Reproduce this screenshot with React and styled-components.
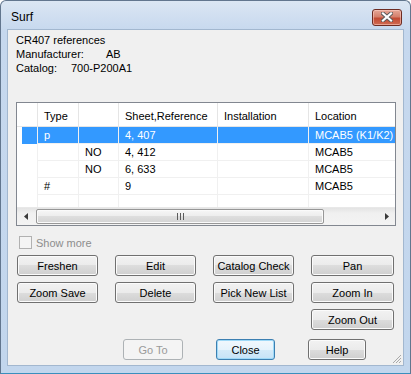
import React from "react";
import styled, { createGlobalStyle, css } from "styled-components";

const GlobalStyle = createGlobalStyle`
  body {
    margin: 0;
    font-family: "Liberation Sans", Arial, sans-serif;
    font-size: 11px;
    color: #000;
    background: #fff;
  }
`;

const Window = styled.div`
  width: 411px;
  height: 374px;
  box-sizing: border-box;
  border: 1px solid #62768e;
  border-bottom-color: #3a8fbd;
  border-radius: 6px 6px 0 0;
  background: linear-gradient(#dbe6f3, #c6d8ee 30px, #c2d6ed);
  padding: 0 6px 7px 6px;
  display: flex;
  flex-direction: column;
`;

const TitleBar = styled.div`
  height: 28px;
  box-sizing: border-box;
  padding: 4px 2px 0 4px;
  display: flex;
  align-items: center;
  justify-content: space-between;
`;

const Title = styled.span`
  font-size: 12px;
  color: #000;
`;

const CloseX = styled.div`
  width: 30px;
  height: 17px;
  box-sizing: border-box;
  border: 1px solid #6d2c22;
  border-radius: 3px;
  background: linear-gradient(#e6a797, #d5806c 45%, #c24a33 55%, #cf6b52);
  box-shadow: inset 0 0 0 1px rgba(255, 210, 200, 0.55);
  display: flex;
  align-items: center;
  justify-content: center;
`;

const Client = styled.div`
  flex: 1;
  position: relative;
  background: #f0f0f0;
  border: 1px solid #a2b7cf;
  padding: 3px 8px 0 8px;
  display: flex;
  flex-direction: column;
`;

const Info = styled.div`
  line-height: 14px;
`;

const Field = styled.div`
  display: flex;
`;

const Label = styled.span`
  width: ${(p) => p.$w}px;
`;

const ListView = styled.div`
  margin-top: 27px;
  width: 380px;
  height: 124px;
  box-sizing: border-box;
  border: 1px solid #828790;
  background: #fff;
  display: flex;
  flex-direction: column;
  overflow: hidden;
`;

const cols = "21px 41px 40px 99px 91px 1fr";

const HeaderRow = styled.div`
  display: grid;
  grid-template-columns: ${cols};
  height: 24px;
  box-sizing: border-box;
  border-bottom: 1px solid #e5e5e5;
  flex-shrink: 0;
`;

const HeaderCell = styled.div`
  border-right: 1px solid #e5e5e5;
  padding: 3px 0 0 6px;
  display: flex;
  align-items: center;
  white-space: nowrap;
  &:last-child {
    border-right: none;
  }
`;

const Body = styled.div`
  flex: 1;
  overflow: hidden;
`;

const Row = styled.div`
  display: grid;
  grid-template-columns: ${cols};
  height: 17px;
`;

const Cell = styled.div`
  border-right: 1px solid #f0f0f0;
  border-bottom: 1px solid #f0f0f0;
  padding-left: 6px;
  display: flex;
  align-items: center;
  white-space: nowrap;
  overflow: hidden;
  ${(p) =>
    p.$selected &&
    css`
      background: #3399ff;
      color: #fff;
    `}
  &:first-child {
    border-bottom: none;
    padding: 0;
    ${(p) =>
      p.$selected &&
      css`
        background: linear-gradient(to right, #fff 5px, #3399ff 5px);
      `}
  }
  &:last-child {
    border-right: none;
  }
`;

const ScrollBar = styled.div`
  height: 17px;
  flex-shrink: 0;
  display: flex;
  align-items: stretch;
  background: linear-gradient(#e3e3e3, #f0f0f0 30%, #f3f3f3);
  border-top: 1px solid #e8e8e8;
`;

const ArrowBtn = styled.div`
  width: 17px;
  display: flex;
  align-items: center;
  justify-content: center;
`;

const Track = styled.div`
  flex: 1;
  padding: 1px 2px;
  display: flex;
`;

const Thumb = styled.div`
  width: 288px;
  box-sizing: border-box;
  border: 1px solid #979797;
  border-radius: 2px;
  background: linear-gradient(#f7f7f7, #ececec 50%, #dedede 50%, #d3d3d3);
  box-shadow: inset 0 0 0 1px #fafafa;
  display: flex;
  align-items: center;
  justify-content: center;
`;

const CheckRow = styled.label`
  margin: 10px 0 0 3px;
  display: flex;
  align-items: center;
  gap: 4px;
  color: #8d8d8d;
  height: 13px;
`;

const Box = styled.span`
  width: 13px;
  height: 13px;
  box-sizing: border-box;
  border: 1px solid #b1b1b1;
  background: #f4f4f4;
`;

const ButtonGrid = styled.div`
  margin: 6px 0 0 1px;
  display: grid;
  grid-template-columns: 81px 81px 81px 83px;
  grid-auto-rows: 21px;
  column-gap: 17px;
  row-gap: 6px;
`;

const Button = styled.div`
  box-sizing: border-box;
  height: 21px;
  width: ${(p) => (p.$w ? `${p.$w}px` : "auto")};
  border: 1px solid #707070;
  border-radius: 3px;
  background: linear-gradient(#f2f2f2, #ebebeb 50%, #dddddd 50%, #cfcfcf);
  box-shadow: inset 0 0 0 1px #fbfbfb;
  display: flex;
  align-items: center;
  justify-content: center;
  white-space: nowrap;
  grid-column: ${(p) => p.$col || "auto"};
  ${(p) =>
    p.$default &&
    css`
      border-color: #3c7fb1;
      background: linear-gradient(#f1f8fd, #e6f3fc 50%, #d5ebf9 50%, #c6e3f7);
      box-shadow: inset 0 0 0 1px #9fd9f7;
    `}
  ${(p) =>
    p.$disabled &&
    css`
      border-color: #adb2b5;
      background: #f4f4f4;
      box-shadow: none;
      color: #9a9a9a;
    `}
`;

const BottomRow = styled.div`
  margin: 9px 0 0 107px;
  display: flex;
  gap: 33px;
`;

const Grip = styled.svg`
  position: absolute;
  right: 1px;
  bottom: 1px;
`;

const rows = [
  ["", "p", "", "4, 407", "", "MCAB5 (K1/K2)"],
  ["", "", "NO", "4, 412", "", "MCAB5"],
  ["", "", "NO", "6, 633", "", "MCAB5"],
  ["", "#", "", "9", "", "MCAB5"],
  ["", "", "", "", "", ""],
];

const headers = ["", "Type", "", "Sheet,Reference", "Installation", "Location"];

export default function App() {
  return (
    <>
      <GlobalStyle />
      <Window>
        <TitleBar>
          <Title>Surf</Title>
          <CloseX>
            <svg width="12" height="10" viewBox="0 0 12 10">
              <path d="M2 1.5 L10 8.5 M10 1.5 L2 8.5" stroke="#5a5a5a" strokeWidth="4" strokeLinecap="square" />
              <path d="M2 1.5 L10 8.5 M10 1.5 L2 8.5" stroke="#fff" strokeWidth="2.2" strokeLinecap="square" />
            </svg>
          </CloseX>
        </TitleBar>
        <Client>
          <Info>
            <div>CR407 references</div>
            <Field>
              <Label $w={90}>Manufacturer:</Label>
              <span>AB</span>
            </Field>
            <Field>
              <Label $w={55}>Catalog:</Label>
              <span>700-P200A1</span>
            </Field>
          </Info>

          <ListView>
            <HeaderRow>
              {headers.map((h, i) => (
                <HeaderCell key={i}>{h}</HeaderCell>
              ))}
            </HeaderRow>
            <Body>
              {rows.map((r, i) => (
                <Row key={i}>
                  {r.map((c, j) => (
                    <Cell key={j} $selected={i === 0}>
                      {c}
                    </Cell>
                  ))}
                </Row>
              ))}
            </Body>
            <ScrollBar>
              <ArrowBtn>
                <svg width="4" height="7" viewBox="0 0 4 7">
                  <path d="M4 0 L0 3.5 L4 7 Z" fill="#3a3a3a" />
                </svg>
              </ArrowBtn>
              <Track>
                <Thumb>
                  <svg width="7" height="7" viewBox="0 0 7 7">
                    <path d="M0.5 0 V7 M3.5 0 V7 M6.5 0 V7" stroke="#5c5c5c" strokeWidth="1" />
                  </svg>
                </Thumb>
              </Track>
              <ArrowBtn>
                <svg width="4" height="7" viewBox="0 0 4 7">
                  <path d="M0 0 L4 3.5 L0 7 Z" fill="#3a3a3a" />
                </svg>
              </ArrowBtn>
            </ScrollBar>
          </ListView>

          <CheckRow>
            <Box />
            Show more
          </CheckRow>

          <ButtonGrid>
            <Button>Freshen</Button>
            <Button>Edit</Button>
            <Button>Catalog Check</Button>
            <Button>Pan</Button>
            <Button>Zoom Save</Button>
            <Button>Delete</Button>
            <Button>Pick New List</Button>
            <Button>Zoom In</Button>
            <Button $col={4}>Zoom Out</Button>
          </ButtonGrid>

          <BottomRow>
            <Button $disabled $w={60}>Go To</Button>
            <Button $default $w={59}>Close</Button>
            <Button $w={58}>Help</Button>
          </BottomRow>

          <Grip width="10" height="10" viewBox="0 0 10 10">
            <path d="M9 1 L1 9 M9 4 L4 9 M9 7 L7 9" stroke="#a9a9a9" strokeWidth="1" />
          </Grip>
        </Client>
      </Window>
    </>
  );
}
